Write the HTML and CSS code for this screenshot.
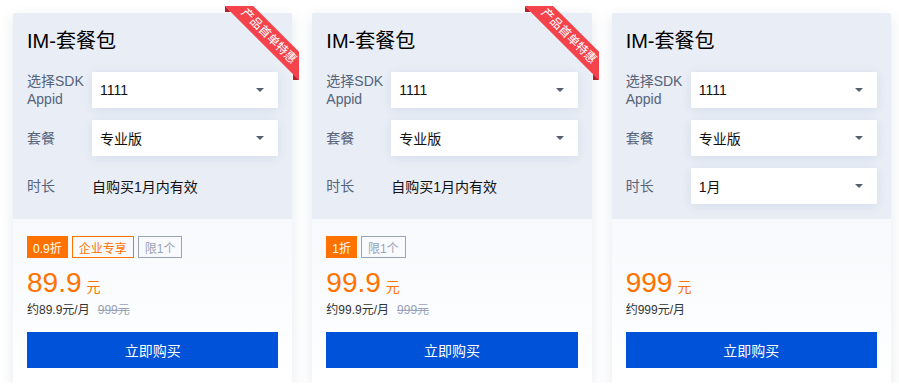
FILE: index.html
```html
<!DOCTYPE html>
<html>
<head>
	<title>IM-套餐包</title>
	<meta charset="UTF-8">
	<meta name="viewport" content="width=device-width, initial-scale=1.0">
	<link rel="stylesheet" href="styles.css">
</head>
<body>
	<div class="plans">
		<div class="plan">
			<div class="ribbon"><span>产品首单特惠</span></div>
			<div class="plan-head">
				<h2>IM-套餐包</h2>
				<div class="field">
					<label>选择SDK Appid</label>
					<div class="select">1111<i class="caret"></i></div>
				</div>
				<div class="field">
					<label>套餐</label>
					<div class="select">专业版<i class="caret"></i></div>
				</div>
				<div class="field">
					<label>时长</label>
					<div class="value">自购买1月内有效</div>
				</div>
			</div>
			<div class="plan-body">
				<div class="tags">
					<span class="tag tag-discount">0.9折</span>
					<span class="tag tag-orange">企业专享</span>
					<span class="tag tag-grey">限1个</span>
				</div>
				<div class="price">89.9<small>元</small></div>
				<div class="per-month">约89.9元/月<del>999元</del></div>
				<button class="buy">立即购买</button>
			</div>
		</div>

		<div class="plan">
			<div class="ribbon"><span>产品首单特惠</span></div>
			<div class="plan-head">
				<h2>IM-套餐包</h2>
				<div class="field">
					<label>选择SDK Appid</label>
					<div class="select">1111<i class="caret"></i></div>
				</div>
				<div class="field">
					<label>套餐</label>
					<div class="select">专业版<i class="caret"></i></div>
				</div>
				<div class="field">
					<label>时长</label>
					<div class="value">自购买1月内有效</div>
				</div>
			</div>
			<div class="plan-body">
				<div class="tags">
					<span class="tag tag-discount">1折</span>
					<span class="tag tag-grey">限1个</span>
				</div>
				<div class="price">99.9<small>元</small></div>
				<div class="per-month">约99.9元/月<del>999元</del></div>
				<button class="buy">立即购买</button>
			</div>
		</div>

		<div class="plan">
			<div class="plan-head">
				<h2>IM-套餐包</h2>
				<div class="field">
					<label>选择SDK Appid</label>
					<div class="select">1111<i class="caret"></i></div>
				</div>
				<div class="field">
					<label>套餐</label>
					<div class="select">专业版<i class="caret"></i></div>
				</div>
				<div class="field">
					<label>时长</label>
					<div class="select">1月<i class="caret"></i></div>
				</div>
			</div>
			<div class="plan-body">
				<div class="tags"></div>
				<div class="price">999<small>元</small></div>
				<div class="per-month">约999元/月</div>
				<button class="buy">立即购买</button>
			</div>
		</div>
	</div>
</body>
</html>
```

FILE: styles.css
```css
body {
	margin: 0;
	padding: 13px 8px 0 13px;
	background-color: #fff;
	font-family: "Liberation Sans", "Noto Sans CJK SC", sans-serif;
	color: #000;
}
.plans {
	display: flex;
	gap: 20px;
}
.plan {
	flex: 1;
	position: relative;
	border-radius: 2px;
	box-shadow: 0 4px 14px rgba(62, 80, 120, 0.13);
}
.plan-head {
	background-color: #e8edf6;
	border-radius: 2px 2px 0 0;
	padding: 14px 14px 15px;
}
.plan-head h2 {
	margin: 0 0 17px;
	height: 28px;
	font-size: 20px;
	font-weight: normal;
	line-height: 28px;
}
.field {
	display: flex;
	align-items: center;
	height: 36px;
	margin-bottom: 12px;
}
.field:last-child {
	margin-bottom: 0;
}
.field label {
	width: 65px;
	flex-shrink: 0;
	font-size: 14px;
	line-height: 18px;
	color: #56637a;
	padding-right: 4px;
	box-sizing: border-box;
}
.select {
	flex: 1;
	height: 36px;
	background-color: #fff;
	display: flex;
	align-items: center;
	justify-content: space-between;
	padding: 0 14px 0 8px;
	font-size: 14px;
	color: #111;
	box-shadow: 0 2px 10px rgba(40, 60, 110, 0.08);
}
.caret {
	width: 0;
	height: 0;
	border-left: 4px solid transparent;
	border-right: 4px solid transparent;
	border-top: 4px solid #555e70;
}
.value {
	font-size: 14px;
	color: #111;
}
.plan-body {
	background: linear-gradient(180deg, #f7f9fc, #fff);
	padding: 17px 14px 15px;
}
.tags {
	display: flex;
	gap: 4px;
	height: 22px;
}
.tag {
	display: inline-flex;
	align-items: center;
	height: 22px;
	box-sizing: border-box;
	padding: 0 5px;
	font-size: 12px;
	border: 1px solid;
}
.tag-discount {
	background-color: #ff7200;
	border-color: #ff7200;
	color: #fff;
}
.tag-orange {
	border-color: #ff7200;
	color: #ff7200;
	padding: 0 6px;
}
.tag-grey {
	border-color: #98a3b7;
	color: #98a3b7;
	padding: 0 6px;
}
.price {
	margin-top: 11px;
	height: 28px;
	font-size: 28px;
	line-height: 28px;
	color: #ff7200;
}
.price small {
	font-size: 14px;
	margin-left: 5px;
}
.per-month {
	margin-top: 3px;
	height: 20px;
	font-size: 12px;
	line-height: 20px;
	color: #333;
}
.per-month del {
	margin-left: 8px;
	color: #98a3b7;
}
.buy {
	display: block;
	width: 100%;
	height: 36px;
	margin-top: 12px;
	border: 0;
	background-color: #0052d9;
	color: #fff;
	font-family: inherit;
	font-size: 14px;
	cursor: pointer;
}
.ribbon {
	position: absolute;
	top: -7px;
	right: -7px;
	width: 74px;
	height: 74px;
	overflow: hidden;
	z-index: 1;
}
.ribbon::before,
.ribbon::after {
	content: "";
	position: absolute;
	border: 3.5px solid #b5212a;
	border-top-color: transparent;
	border-right-color: transparent;
}
.ribbon::before {
	top: 0;
	left: 0;
}
.ribbon::after {
	bottom: 0;
	right: 0;
}
.ribbon span {
	position: absolute;
	left: -11px;
	top: 20px;
	width: 110px;
	height: 20px;
	line-height: 20px;
	text-align: center;
	background-color: #f4434b;
	color: #fff;
	font-size: 12px;
	transform: rotate(45deg);
}
```
